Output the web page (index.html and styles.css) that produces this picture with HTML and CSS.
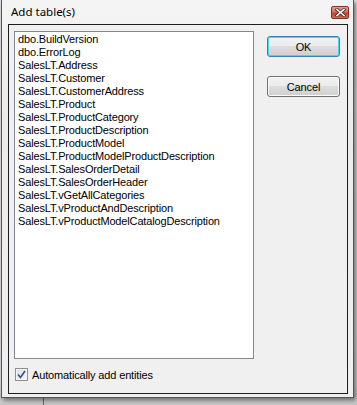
FILE: index.html
```html
<!DOCTYPE html>
<html lang="en">
<head>
    <title>Add table(s)</title>
    <link rel="stylesheet" href="styles.css">
</head>
<body>
    <div class="desktop">
        <div class="window">
            <div class="titlebar">
                <span class="title">Add table(s)</span>
                <span class="close">
                    <svg width="11" height="9" viewBox="0 0 11 9">
                        <path d="M2 1.5 L9 7.5 M9 1.5 L2 7.5" stroke="#4a2a26" stroke-width="3.2" stroke-linecap="square"/>
                        <path d="M2 1.5 L9 7.5 M9 1.5 L2 7.5" stroke="#ffffff" stroke-width="1.6" stroke-linecap="square"/>
                    </svg>
                </span>
            </div>
            <div class="client">
                <div class="top">
                    <div class="listbox">
                        <div class="item">dbo.BuildVersion</div>
                        <div class="item">dbo.ErrorLog</div>
                        <div class="item">SalesLT.Address</div>
                        <div class="item">SalesLT.Customer</div>
                        <div class="item">SalesLT.CustomerAddress</div>
                        <div class="item">SalesLT.Product</div>
                        <div class="item">SalesLT.ProductCategory</div>
                        <div class="item">SalesLT.ProductDescription</div>
                        <div class="item">SalesLT.ProductModel</div>
                        <div class="item">SalesLT.ProductModelProductDescription</div>
                        <div class="item">SalesLT.SalesOrderDetail</div>
                        <div class="item">SalesLT.SalesOrderHeader</div>
                        <div class="item">SalesLT.vGetAllCategories</div>
                        <div class="item">SalesLT.vProductAndDescription</div>
                        <div class="item">SalesLT.vProductModelCatalogDescription</div>
                    </div>
                    <div class="buttons">
                        <button class="btn default">OK</button>
                        <button class="btn">Cancel</button>
                    </div>
                </div>
                <label class="check">
                    <span class="box">
                        <svg width="9" height="9" viewBox="0 0 9 9">
                            <path d="M1 4.5 L3.5 7.5 L8 1" fill="none" stroke="#2a4f9a" stroke-width="1.6"/>
                        </svg>
                    </span>
                    <span>Automatically add entities</span>
                </label>
            </div>
        </div>
        <div class="ground"></div>
    </div>
</body>
</html>
```
FILE: styles.css
```css
* {
    margin: 0;
    padding: 0;
    box-sizing: border-box;
}
body {
    background: #d6d6d6;
    font-family: "Liberation Sans", Arial, sans-serif;
    font-size: 11px;
    letter-spacing: -0.15px;
    color: #000;
    overflow: hidden;
}
.desktop {
    width: 357px;
    height: 405px;
    background: linear-gradient(to bottom, #e9e9e9, #dedede 95%, #c8c8c8);
    position: relative;
}
.ground {
    position: absolute;
    left: 43px;
    top: 398px;
    width: 1px;
    height: 7px;
    background: #6a6a6a;
}
.window {
    position: relative;
    margin-left: 1px;
    width: 353px;
    height: 398px;
    display: flex;
    flex-direction: column;
    background: linear-gradient(to bottom, #f4f4f4, #ebebeb 30%, #efefef);
    border: 1px solid #555;
    border-top: none;
    padding: 0 5px 3px 6px;
    box-shadow: 2px 2px 5px rgba(0, 0, 0, 0.55);
    z-index: 1;
}
.titlebar {
    height: 24px;
    display: flex;
    align-items: center;
    justify-content: space-between;
    padding: 0 0 1px 3px;
}
.title {
    font-family: "Noto Sans", "Open Sans", sans-serif;
    font-size: 11.5px;
    letter-spacing: 0;
    color: #000;
}
.close {
    width: 18px;
    height: 13px;
    margin-top: 2px;
    margin-right: -1px;
    border: 1px solid #83302a;
    border-radius: 2px;
    background: linear-gradient(to bottom, #eaa090, #d86a58 45%, #c8452f 55%, #d4664c);
    display: flex;
    align-items: center;
    justify-content: center;
}
.client {
    flex: 1;
    background: #f0f0f0;
    border: 1px solid #1e1e1e;
    padding: 6px 5px 0 5px;
    display: flex;
    flex-direction: column;
}
.top {
    display: flex;
    gap: 13px;
}
.listbox {
    width: 240px;
    height: 328px;
    background: #fff;
    border: 1px solid #828790;
    padding: 1px 3px;
}
.item {
    height: 13px;
    line-height: 13px;
    white-space: nowrap;
}
.buttons {
    display: flex;
    flex-direction: column;
    gap: 19px;
    padding-top: 5px;
}
.btn {
    width: 73px;
    height: 21px;
    font-family: "Liberation Sans", Arial, sans-serif;
    font-size: 11px;
    letter-spacing: -0.15px;
    color: #000;
    border: 1px solid #707070;
    border-radius: 3px;
    background: linear-gradient(to bottom, #f2f2f2, #ebebeb 50%, #dddddd 50%, #cfcfcf);
    box-shadow: inset 0 0 0 1px #fcfcfc;
}
.btn.default {
    border-color: #3c7fb1;
    box-shadow: inset 0 0 0 1px #48d4f4;
}
.check {
    display: flex;
    align-items: center;
    gap: 4px;
    margin-top: 9px;
    padding-left: 1px;
}
.box {
    width: 13px;
    height: 13px;
    border: 1px solid #8e8f8f;
    background: linear-gradient(135deg, #dcdcdc, #fbfbfb);
    box-shadow: inset 0 0 0 1px #f4f4f4;
    display: flex;
    align-items: center;
    justify-content: center;
}
```
